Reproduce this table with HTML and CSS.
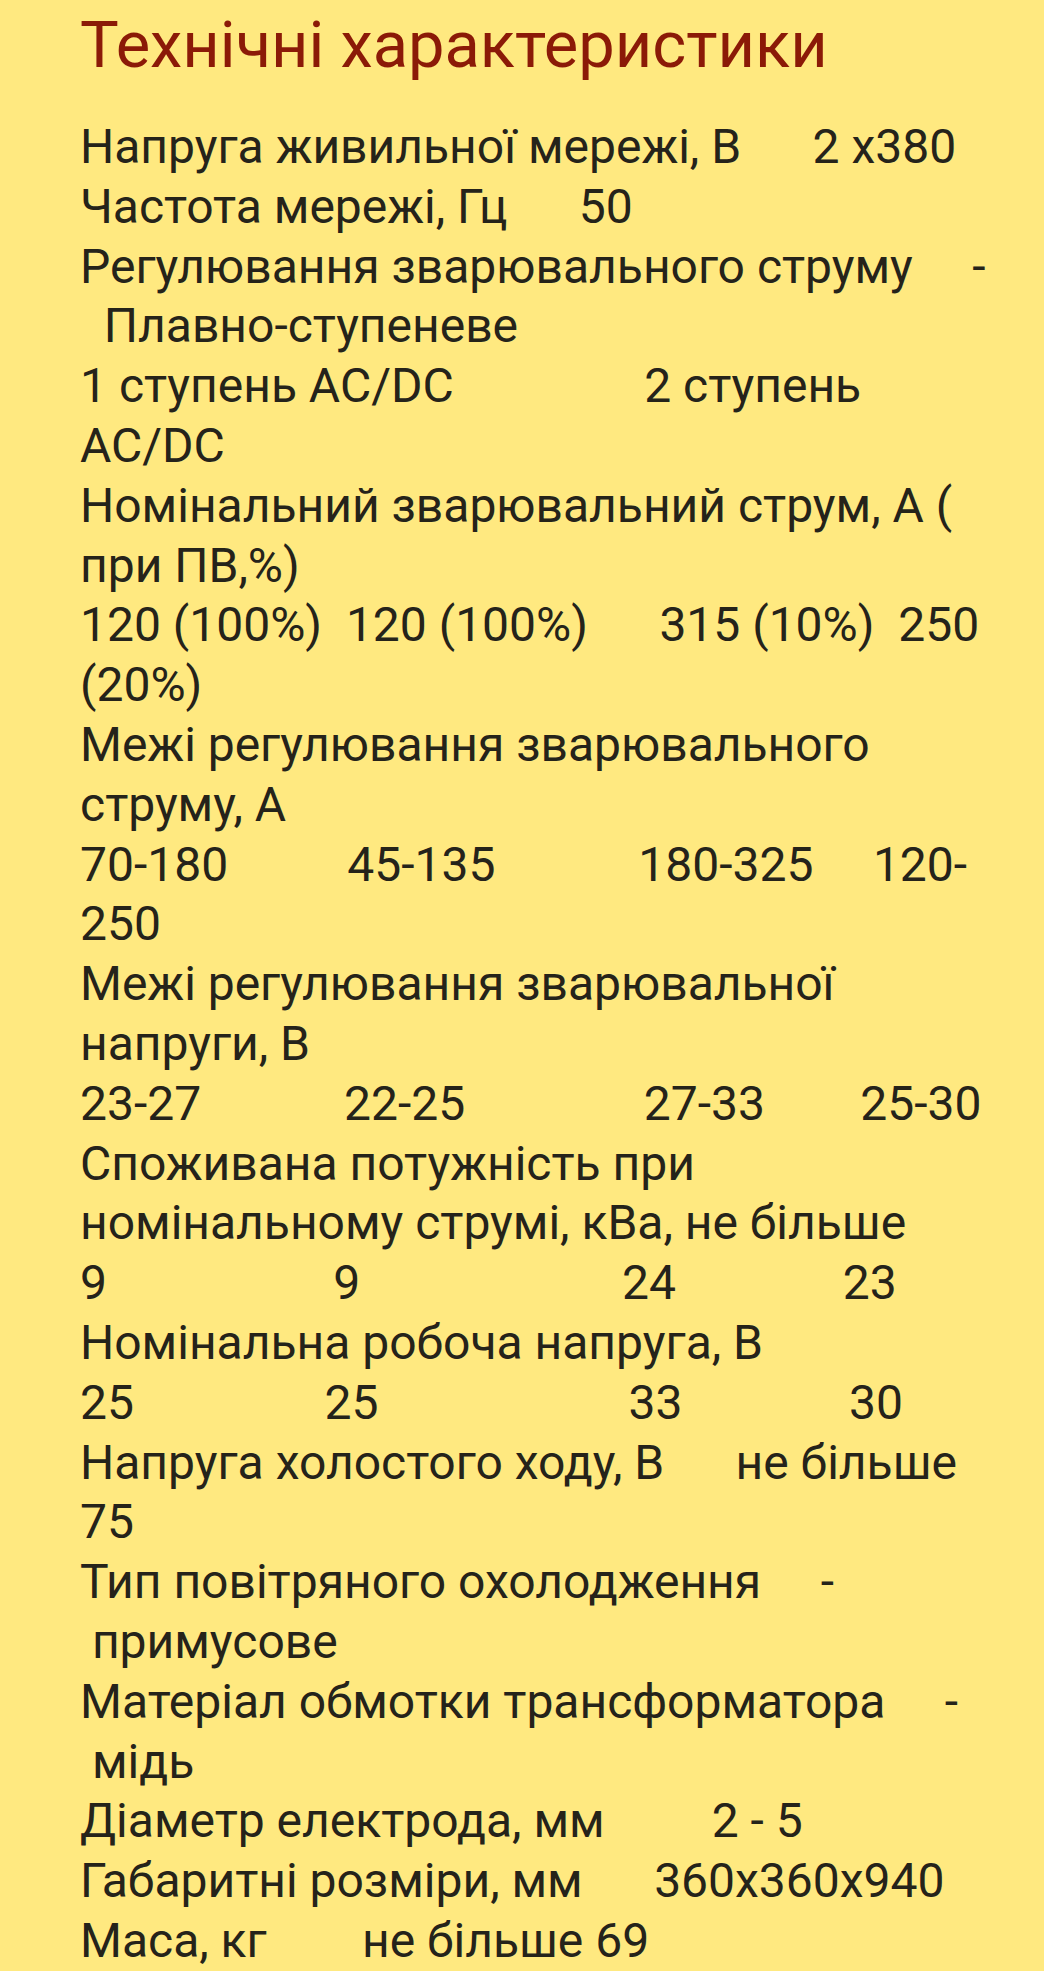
FILE: index.html
```html
<!DOCTYPE html>
<html lang="uk">
<head>
<meta charset="utf-8">
<title>Технічні характеристики</title>
<link rel="stylesheet" href="styles.css">
</head>
<body>
<main class="page">
<h1 class="title">Технічні характеристики</h1>
<div class="specs">
<div class="ln">Напруга живильної мережі, В      2 x380</div>
<div class="ln">Частота мережі, Гц      50</div>
<div class="ln">Регулювання зварювального струму     -</div>
<div class="ln">  Плавно-ступеневе</div>
<div class="ln">1 ступень AC/DC                2 ступень</div>
<div class="ln">AC/DC</div>
<div class="ln">Номінальний зварювальний струм, А (</div>
<div class="ln">при ПВ,%)</div>
<div class="ln">120 (100%)  120 (100%)      315 (10%)  250</div>
<div class="ln">(20%)</div>
<div class="ln">Межі регулювання зварювального</div>
<div class="ln">струму, А</div>
<div class="ln">70-180          45-135            180-325     120-</div>
<div class="ln">250</div>
<div class="ln">Межі регулювання зварювальної</div>
<div class="ln">напруги, В</div>
<div class="ln">23-27            22-25               27-33        25-30</div>
<div class="ln">Споживана потужність при</div>
<div class="ln">номінальному струмі, кВа, не більше</div>
<div class="ln">9                   9                      24              23</div>
<div class="ln">Номінальна робоча напруга, В</div>
<div class="ln">25                25                     33              30</div>
<div class="ln">Напруга холостого ходу, В      не більше</div>
<div class="ln">75</div>
<div class="ln">Тип повітряного охолодження     -</div>
<div class="ln"> примусове</div>
<div class="ln">Матеріал обмотки трансформатора     -</div>
<div class="ln"> мідь</div>
<div class="ln">Діаметр електрода, мм         2 - 5</div>
<div class="ln">Габаритні розміри, мм      360x360x940</div>
<div class="ln">Маса, кг        не більше 69</div>
</div>
</main>
</body>
</html>
```

FILE: styles.css
```css
html, body {
  margin: 0;
  padding: 0;
  background: #ffe980;
}

.page {
  padding: 7px 0 0 80px;
  font-family: Roboto, "Noto Sans", "Liberation Sans", sans-serif;
}

.title {
  margin: 0;
  font-size: 65px;
  font-weight: 400;
  line-height: 76px;
  color: #8b1a07;
}

.specs {
  margin-top: 34px;
  font-size: 48px;
  line-height: 59.8px;
  color: #25231a;
}

.ln {
  white-space: pre;
}
```
